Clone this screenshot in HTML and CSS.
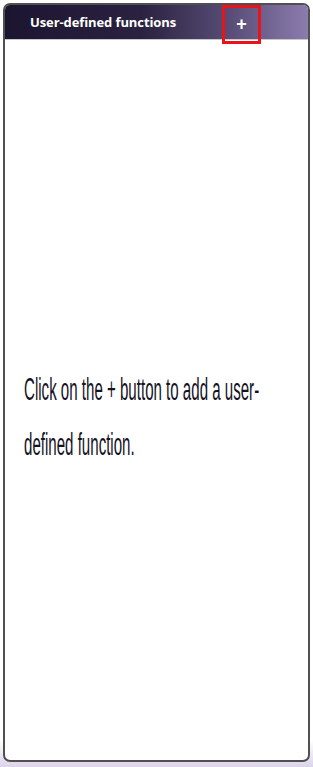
FILE: index.html
```html
<!DOCTYPE html>
<html>
<head>
<meta charset="utf-8">
<link rel="stylesheet" href="styles.css">
</head>
<body>
<div class="page">
  <div class="panel">
    <div class="header">
      <span class="title">User-defined functions</span>
      <span class="add">+</span>
    </div>
    <div class="content">
      <p class="msg">Click on the + button to add a user-defined function.</p>
    </div>
  </div>
</div>
</body>
</html>
```
FILE: styles.css
```css
html, body {
  margin: 0;
  padding: 0;
}
body {
  width: 313px;
  height: 767px;
  background: linear-gradient(to bottom, #ffffff 0, #ffffff 740px, #dcd3e9 767px);
  overflow: hidden;
}
.page {
  padding: 3px 3px 5px 3px;
  box-sizing: border-box;
  height: 767px;
  display: flex;
}
.panel {
  flex: 1;
  border: 2px solid #505050;
  border-radius: 7px;
  background: #ffffff;
  display: flex;
  flex-direction: column;
  overflow: hidden;
}
.header {
  height: 34px;
  flex: none;
  background: linear-gradient(to right, #1c1530 0%, #2a2240 45%, #5a4e78 75%, #8b7cae 100%);
  display: flex;
  align-items: center;
  padding-left: 25px;
  border-bottom: 1px solid #c8c8c8;
}
.title {
  color: #ffffff;
  font-family: "Open Sans", "Liberation Sans", sans-serif;
  font-weight: 700;
  font-size: 13px;
  letter-spacing: -0.1px;
}
.add {
  margin-left: 46px;
  width: 33px;
  height: 33px;
  margin-top: 4px;
  border: 3px solid #e8141a;
  color: #ffffff;
  font-family: "Liberation Sans", sans-serif;
  font-weight: 700;
  font-size: 18px;
  display: flex;
  align-items: center;
  justify-content: center;
}
.content {
  flex: 1;
  display: flex;
  align-items: center;
  padding-left: 19px;
}
.msg {
  margin: 0;
  width: 515px;
  flex: none;
  font-family: "Liberation Sans", sans-serif;
  font-size: 31px;
  line-height: 55px;
  color: #14131f;
  transform: scaleX(0.4865);
  transform-origin: left center;
  position: relative;
  top: 17px;
}
```
